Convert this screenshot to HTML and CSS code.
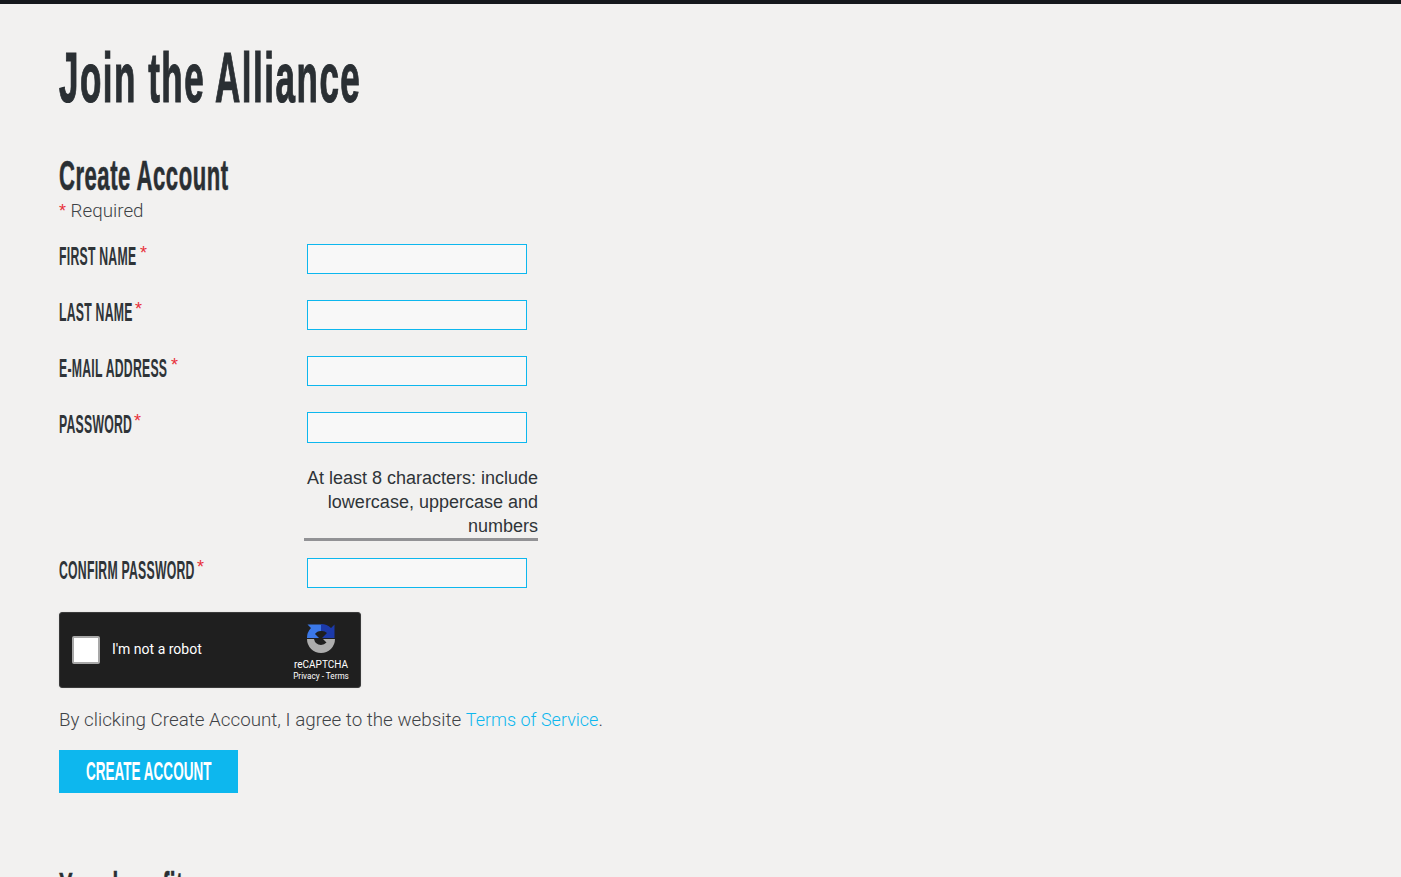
FILE: index.html
```html
<!DOCTYPE html>
<html lang="en">
<head>
<meta charset="utf-8">
<title>Join the Alliance</title>
<link rel="stylesheet" href="styles.css">
</head>
<body>
<main class="page">
  <h1 class="title"><span class="squeeze">Join the Alliance</span></h1>
  <h2 class="subtitle"><span class="squeeze">Create Account</span></h2>
  <p class="required"><span class="star">*</span> Required</p>
  <form class="form">
    <div class="row">
      <label class="label"><span class="squeeze">FIRST NAME</span><span class="star">*</span></label>
      <input class="field" type="text">
    </div>
    <div class="row">
      <label class="label"><span class="squeeze">LAST NAME</span><span class="star">*</span></label>
      <input class="field" type="text">
    </div>
    <div class="row">
      <label class="label"><span class="squeeze">E-MAIL ADDRESS</span><span class="star">*</span></label>
      <input class="field" type="text">
    </div>
    <div class="row row-tight">
      <label class="label"><span class="squeeze">PASSWORD</span><span class="star">*</span></label>
      <input class="field field-tall" type="password">
    </div>
    <p class="hint">At least 8 characters: include lowercase, uppercase and numbers</p>
    <div class="row row-confirm">
      <label class="label"><span class="squeeze">CONFIRM PASSWORD</span><span class="star">*</span></label>
      <input class="field" type="password">
    </div>
    <div class="captcha">
      <span class="check"></span>
      <span class="robot">I'm not a robot</span>
      <div class="brand">
        <svg class="logo" viewBox="0 0 30 30" width="30" height="30" aria-hidden="true">
          <path fill="#3b78e7" d="M1 15 A14 14 0 0 1 5 5 L1.500 1.500 H15 V8 A7 7 0 0 0 9 11 L13 15 Z"/>
          <path fill="#1c3aa9" d="M15 1 A14 14 0 0 1 25 5 L28.500 1.500 V15 H16 L21 10 A7 7 0 0 0 15 8 Z"/>
          <path fill="#adadad" d="M1 16 H8 A7.500 7.500 0 0 0 15 22 A7.500 7.500 0 0 0 20.500 19.500 L17 16 H29 A14 14 0 0 1 1 16 Z"/>
        </svg>
        <span class="brand-name">reCAPTCHA</span>
        <span class="brand-links">Privacy - Terms</span>
      </div>
    </div>
    <p class="agree">By clicking Create Account, I agree to the website <a class="link" href="#">Terms of Service</a>.</p>
    <button class="submit" type="button"><span class="squeeze">CREATE ACCOUNT</span></button>
  </form>
  <h2 class="subtitle next"><span class="squeeze">Your benefits</span></h2>
</main>
</body>
</html>
```
FILE: styles.css
```css
* { box-sizing: border-box; }
html, body { margin: 0; height: 100%; overflow: hidden; }
body {
  background: #f2f1f0;
  border-top: 4px solid #15181c;
  color: #2a2f33;
  font-family: "Liberation Sans", Arial, sans-serif;
}
.page { padding: 0 0 0 59px; }
.squeeze { display: inline-block; transform-origin: left center; white-space: nowrap; }
.title {
  margin: 0;
  padding-top: 37px;
  height: 151px;
  font-size: 70px;
  line-height: 74px;
  font-weight: 700;
  letter-spacing: 3px;
  -webkit-text-stroke: 1.2px #2a2f33;
}
.title .squeeze { transform: scaleX(0.5); }
.subtitle {
  margin: 0;
  height: 41px;
  font-size: 42px;
  line-height: 41px;
  font-weight: 700;
  letter-spacing: 1px;
  color: #2a2f33;
  -webkit-text-stroke: 0.6px #2a2f33;
}
.subtitle .squeeze { transform: scaleX(0.525); }
.required {
  margin: 0;
  height: 48px;
  padding-top: 3px;
  font-family: Roboto, "Liberation Sans", sans-serif;
  font-weight: 300;
  font-size: 18.8px;
  line-height: 24px;
  color: #3f4347;
}
.star { color: #e8303a; font-family: "Liberation Sans", sans-serif; font-weight: 400; font-size: 18px; }
.form { display: block; }
.row { display: flex; align-items: flex-start; height: 30px; margin-bottom: 26px; }
.row-tight { height: 31px; margin-bottom: 23px; }
.row-confirm { margin-bottom: 24px; }
.label {
  position: relative;
  width: 248px;
  height: 26px;
  flex: none;
  font-size: 25px;
  line-height: 24px;
  font-weight: 700;
  letter-spacing: 0.5px;
  color: #2f3438;
}
.label .squeeze { transform: scaleX(0.49); }
.label .star { position: absolute; top: -3px; letter-spacing: 0; }
.row:nth-child(1) .star { left: 81px; }
.row:nth-child(2) .star { left: 76px; }
.row:nth-child(3) .star { left: 112px; }
.row:nth-child(4) .star { left: 75px; }
.row-confirm .star { left: 138px; }
.field {
  width: 220px;
  height: 30px;
  margin: 0;
  padding: 0 6px;
  background: #f8f8f8;
  border: 1px solid #0db7ee;
  border-radius: 0;
  outline: none;
}
.field-tall { height: 31px; }
.hint {
  width: 234px;
  margin: 0 0 17px 245px;
  border-bottom: 3px solid #929295;
  font-size: 18px;
  line-height: 24px;
  text-align: right;
  color: #2f3438;
  height: 75px;
}
.captcha {
  display: flex;
  align-items: center;
  width: 302px;
  height: 76px;
  padding-left: 12px;
  background: #1f1f1f;
  border: 1px solid #3a3a3a;
  border-radius: 3px;
  box-shadow: 0 0 3px rgba(0, 0, 0, 0.08);
  margin-bottom: 20px;
}
.check {
  flex: none;
  width: 28px;
  height: 28px;
  background: #fff;
  border: 2px solid #a8a8a8;
  border-radius: 2px;
}
.robot {
  margin: 0 0 2px 12px;
  width: 181px;
  flex: none;
  font-family: Roboto, sans-serif;
  font-size: 14px;
  color: #fff;
}
.brand {
  display: flex;
  flex-direction: column;
  align-items: center;
  width: 56px;
  margin-top: 5px;
}
.logo { display: block; margin-bottom: 5px; }
.brand-name { font-family: Roboto, sans-serif; font-size: 10px; line-height: 13px; color: #fff; white-space: nowrap; }
.brand-links { font-family: Roboto, sans-serif; font-size: 8.2px; line-height: 11px; color: #fff; white-space: nowrap; }
.agree {
  margin: 0 0 18px;
  font-family: Roboto, "Liberation Sans", sans-serif;
  font-weight: 300;
  font-size: 18.8px;
  line-height: 24px;
  color: #3f4347;
}
.link { color: #0db7ee; font-size: 18px; text-decoration: none; }
.submit {
  display: block;
  width: 179px;
  height: 43px;
  padding: 0 0 0 27px;
  text-align: left;
  background: #0db7ee;
  border: 0;
  color: #fff;
  font-family: "Liberation Sans", sans-serif;
  font-size: 26px;
  line-height: 43px;
  font-weight: 700;
}
.submit .squeeze { transform: scaleX(0.52); }
.next { margin-top: 74px; }
.next .squeeze { transform: scaleX(0.49); }
```
